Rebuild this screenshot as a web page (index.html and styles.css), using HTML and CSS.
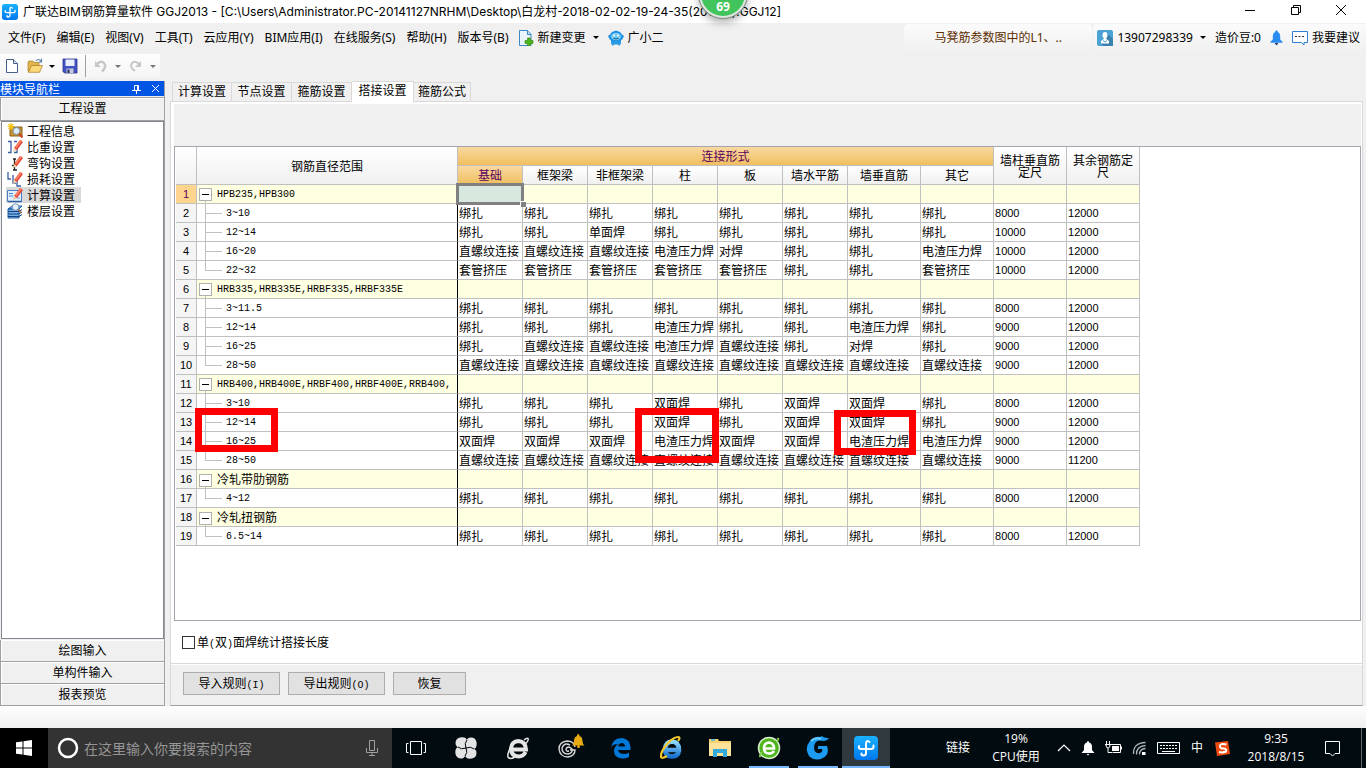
FILE: index.html
```html
<!DOCTYPE html>
<html lang="zh-CN">
<head>
<meta charset="utf-8">
<title>广联达BIM钢筋算量软件 GGJ2013</title>
<link rel="stylesheet" href="styles.css">
</head>
<body>
<svg width="0" height="0" class="defs" aria-hidden="true">
  <defs>
    <linearGradient id="g-app" x1="0" y1="0" x2="0" y2="1"><stop offset="0" stop-color="#1ab2ff"/><stop offset="1" stop-color="#0078ee"/></linearGradient>
    <linearGradient id="g-ie" x1="0" y1="0" x2="0" y2="1"><stop offset="0" stop-color="#8fdcff"/><stop offset="1" stop-color="#1a74cf"/></linearGradient>
    <symbol id="app" viewBox="0 0 24 24">
      <rect width="24" height="24" rx="4" fill="url(#g-app)"/>
      <path d="M15.500 6Q12 3.500 12 8v9q0 2.500-2.500 2.500T7.500 17.500M5 10Q4 13 7.500 13h9.500q3 0 2.500-3.500" fill="none" stroke="#fff" stroke-width="2" stroke-linecap="round"/>
    </symbol>
    <symbol id="pencil" viewBox="0 0 16 16"><path d="M7 9L13 1l3 2-6 8z" fill="#e8432e"/><path d="M8 8l6-7 1 .7-5.500 7.300z" fill="#ff8a6d"/><path d="M7 9l3 2-4 2z" fill="#f3cfa0"/></symbol>
  </defs>
</svg>

<div class="window">
  <header class="titlebar">
    <svg class="i16" viewBox="0 0 24 24"><use href="#app"/></svg>
    <h1 class="title">广联达BIM钢筋算量软件 GGJ2013 - [C:\Users\Administrator.PC-20141127NRHM\Desktop\白龙村-2018-02-02-19-24-35(2018版).GGJ12]</h1>
    <div class="speed">69</div>
    <div class="winctl">
      <button aria-label="最小化"><svg width="12" height="12"><path d="M1 6.500h10" stroke="#000"/></svg></button>
      <button aria-label="还原"><svg width="12" height="12"><path d="M1.500 3.500h7v7h-7zM3.500 3.500v-2h7v7h-2" fill="none" stroke="#000"/></svg></button>
      <button aria-label="关闭"><svg width="12" height="12"><path d="M1 1l10 10M11 1L1 11" stroke="#000"/></svg></button>
    </div>
  </header>

  <nav class="menubar">
    <div class="menus">
      <button>文件(F)</button><button>编辑(E)</button><button>视图(V)</button><button>工具(T)</button><button>云应用(Y)</button><button>BIM应用(I)</button><button>在线服务(S)</button><button>帮助(H)</button><button>版本号(B)</button>
    </div>
    <button class="mi">
      <svg class="i16" viewBox="0 0 16 16"><path d="M1.500.5h8l3.500 3.500v11.500H1.500z" fill="#eaf4fd" stroke="#3d87c4"/><path d="M9.500.5v4H13" fill="#bfdcf5" stroke="#3d87c4"/><path d="M9.500 8h3v2.500H15v3h-2.500V16h-3v-2.500H7v-3h2.500z" fill="#4db31c" stroke="#2f8410" stroke-width=".6"/></svg>
      新建变更 <i class="caret"></i>
    </button>
    <button class="mi">
      <svg class="i16" viewBox="0 0 16 16"><path d="M3 9h10v4.500l-1.500 2.300-2-1.300h-3l-2 1.300L3 13.500z" fill="#2a9be6"/><path d="M0 6l2-1.500L4 2l4-1.500L12 2l2 2.500L16 6l-1.500 3-2 2h-9l-2-2z" fill="#1c8fe0"/><ellipse cx="8" cy="6.500" rx="5.200" ry="3.700" fill="#79ccf8"/><circle cx="6" cy="5.500" r=".9" fill="#fff"/><circle cx="10" cy="5.500" r=".9" fill="#fff"/><path d="M5.500 8q2.500 1.800 5 0" stroke="#15578e" fill="none"/></svg>
      广小二
    </button>
    <div class="ticker">马凳筋参数图中的L1、..</div>
    <div class="account">
      <svg class="i16" viewBox="0 0 16 16"><rect width="16" height="16" rx="2" fill="#4aa3d4"/><path d="M11 4l5 5v7H6l-2-3z" fill="#3a83b0"/><path d="M5.500 5q0-3 2.500-3t2.500 3q0 3-1.500 3.800L12 11v2.500H4V11l3-2.200Q5.500 8 5.500 5z" fill="#fff"/><path d="M6 10.500l2 1.500 2-1.500" stroke="#4aa3d4" fill="none"/></svg>
      <button class="phone">13907298339 <i class="caret"></i></button>
      <span>造价豆:0</span>
      <svg class="i14" viewBox="0 0 14 16"><path d="M7 0q1.500 0 1.500 1.500Q11 2.500 11 6v3.500L13.500 12v1H.5v-1L3 9.500V6q0-3.500 2.500-4.500Q5.500 0 7 0z" fill="#2b8cf0"/><path d="M5 13.500h4L7 16z" fill="#17385c"/></svg>
      <button class="suggest"><svg class="i16" viewBox="0 0 16 16"><path d="M.5 1.500h15v11H12V15l-2.500-2.500h-9z" fill="#fff" stroke="#2f7fd8"/><path d="M3 6.500h2m1.500 0h2m1.500 0h2" stroke="#333"/></svg>我要建议</button>
    </div>
  </nav>

  <div class="toolbar">
    <button aria-label="新建"><svg class="i16" viewBox="0 0 16 16"><path d="M2.500 1.500h7l4 4v9h-11z" fill="#fff" stroke="#47608a"/><path d="M9.500 1.500v4h4" fill="#cfdcf0" stroke="#47608a"/></svg></button>
    <button aria-label="打开"><svg class="i16" viewBox="0 0 16 16"><path d="M1 4l1-1h4l1 1.500h5V8H5l-3 6-1-1z" fill="#e2b64f" stroke="#a9791f" stroke-width=".7"/><path d="M4.500 7.500h11l-3 6.800h-11z" fill="#fbd877" stroke="#a9791f" stroke-width=".7"/><path d="M9 3q2-3 5 0M14.500.8V4h-3" fill="none" stroke="#5b7fae" stroke-width="1.200"/></svg><i class="caret"></i></button>
    <button aria-label="保存"><svg class="i16" viewBox="0 0 16 16"><path d="M1 1h14v14H2.500L1 13.500z" fill="#4353c4" stroke="#283387" stroke-width=".8"/><path d="M3.500 1.500h9V8h-9z" fill="#e8f0fb"/><path d="M4.500 10.500h7V15h-7z" fill="#c3c9d8"/><path d="M5.500 11.500h2V15h-2z" fill="#252e63"/></svg></button>
    <span class="tsep"></span>
    <button aria-label="撤销" disabled><svg class="i16" viewBox="0 0 16 16"><path d="M4 6q4-4 7-1 3 4-2 8.500" fill="none" stroke="#c6c6c6" stroke-width="2.400"/><path d="M2 3v6h6z" fill="#c6c6c6"/></svg><i class="caret dim"></i></button>
    <button aria-label="重做" disabled><svg class="i16" viewBox="0 0 16 16"><path d="M11 6Q7 2 4 5q-3 4 3 8" fill="none" stroke="#c6c6c6" stroke-width="2"/><path d="M13 3v6H7z" fill="#c6c6c6"/></svg><i class="caret dim"></i></button>
  </div>

  <main class="main">
    <aside class="dock">
      <div class="docktitle"><span>模块导航栏</span>
        <button aria-label="固定"><svg width="9" height="10"><path d="M2.500 6V1.500h4V6M5.500 1v5M0 6.500h9M4.500 7v3" fill="none" stroke="#fff"/></svg></button>
        <button aria-label="关闭"><svg width="9" height="9"><path d="M1 1l7 7M8 1L1 8" stroke="#fff"/></svg></button>
      </div>
      <button class="section">工程设置</button>
      <ul class="navlist">
        <li><a href="#"><svg class="i16" viewBox="0 0 16 16"><path d="M3 4h12v9H3z" fill="#c8912d" stroke="#8b631c"/><path d="M4 0v7M.5 3.500h7M1.500 1l5 5M6.500 1l-5 5" stroke="#f5c518" stroke-width="1.200"/><circle cx="9.500" cy="8" r="3.500" fill="#dcecfa" stroke="#7590ab"/><path d="M12 10.500l3.500 4" stroke="#c44d22" stroke-width="2"/></svg><span>工程信息</span></a></li>
        <li><a href="#"><svg class="i16" viewBox="0 0 16 16"><path d="M1 2.500h3v11H1M7 2.500h3M7 13.500h3V9" fill="none" stroke="#3b5fa0" stroke-width="1.300"/><use href="#pencil"/></svg><span>比重设置</span></a></li>
        <li><a href="#"><svg class="i16" viewBox="0 0 16 16"><path d="M6 4h3M7.500 4v11M5 10.500h5M6 15h4" fill="none" stroke="#222" stroke-width="1.300"/><use href="#pencil"/></svg><span>弯钩设置</span></a></li>
        <li><a href="#"><svg class="i16" viewBox="0 0 16 16"><path d="M1 1v7h3M6 4v8h3M10 9v6h4" fill="none" stroke="#3b5fa0" stroke-width="1.300"/><use href="#pencil"/></svg><span>损耗设置</span></a></li>
        <li><a href="#" class="on"><svg class="i16" viewBox="0 0 16 16"><path d="M.5 3.500h14v11H.5z" fill="#e4effc" stroke="#4d7ec2"/><path d="M2 6.500h4M2 9h4" stroke="#3f8ae0"/><path d="M1 14.500h13.500" stroke="#2d5ca5" stroke-width="1.500"/><path d="M6 11h7" stroke="#7da7dc"/><use href="#pencil"/></svg><span>计算设置</span></a></li>
        <li><a href="#"><svg class="i16" viewBox="0 0 16 16"><path d="M1 6l4-3h10l-3 3zM1 6h11v9H1z" fill="#76b3ea" stroke="#1f5ea8"/><path d="M1 8.500h11l3-2M1 11h11l3-2M1 13.500h11l3-2" fill="none" stroke="#123f7b"/><circle cx="8.500" cy="4" r="3.300" fill="#e3f1fd" stroke="#7995b2"/><path d="M11 6.500l3 3" stroke="#b46c35" stroke-width="1.500"/></svg><span>楼层设置</span></a></li>
      </ul>
      <button class="section">绘图输入</button>
      <button class="section">单构件输入</button>
      <button class="section">报表预览</button>
    </aside>

    <section class="work">
      <div class="tabs" role="tablist">
        <button role="tab">计算设置</button><button role="tab">节点设置</button><button role="tab">箍筋设置</button><button role="tab" class="on" aria-selected="true">搭接设置</button><button role="tab">箍筋公式</button>
      </div>
      <div class="page">
        <div class="filler"></div>
        <div class="gridbox">
          <table class="grid">
            <colgroup><col class="c-no"><col class="c-name"><col span="6" class="c-s"><col span="4" class="c-m"></colgroup>
            <thead>
              <tr><th rowspan="2"></th><th rowspan="2">钢筋直径范围</th><th colspan="8" class="hot">连接形式</th><th rowspan="2" class="wrap">墙柱垂直筋定尺</th><th rowspan="2" class="wrap">其余钢筋定尺</th></tr>
              <tr><th class="hot">基础</th><th>框架梁</th><th>非框架梁</th><th>柱</th><th>板</th><th>墙水平筋</th><th>墙垂直筋</th><th>其它</th></tr>
            </thead>
            <tbody>
              <tr class="grp"><th class="cur">1</th><td class="name"><button aria-label="折叠"></button>HPB235,HPB300</td><td class="sel"><span></span></td><td></td><td></td><td></td><td></td><td></td><td></td><td></td><td></td><td></td></tr>
              <tr><th>2</th><td class="name">3~10</td><td>绑扎</td><td>绑扎</td><td>绑扎</td><td>绑扎</td><td>绑扎</td><td>绑扎</td><td>绑扎</td><td>绑扎</td><td class="n">8000</td><td class="n">12000</td></tr>
              <tr><th>3</th><td class="name">12~14</td><td>绑扎</td><td>绑扎</td><td>单面焊</td><td>绑扎</td><td>绑扎</td><td>绑扎</td><td>绑扎</td><td>绑扎</td><td class="n">10000</td><td class="n">12000</td></tr>
              <tr><th>4</th><td class="name">16~20</td><td>直螺纹连接</td><td>直螺纹连接</td><td>直螺纹连接</td><td>电渣压力焊</td><td>对焊</td><td>绑扎</td><td>绑扎</td><td>电渣压力焊</td><td class="n">10000</td><td class="n">12000</td></tr>
              <tr class="last"><th>5</th><td class="name">22~32</td><td>套管挤压</td><td>套管挤压</td><td>套管挤压</td><td>套管挤压</td><td>套管挤压</td><td>绑扎</td><td>绑扎</td><td>套管挤压</td><td class="n">10000</td><td class="n">12000</td></tr>
              <tr class="grp"><th>6</th><td class="name"><button aria-label="折叠"></button>HRB335,HRB335E,HRBF335,HRBF335E</td><td></td><td></td><td></td><td></td><td></td><td></td><td></td><td></td><td></td><td></td></tr>
              <tr><th>7</th><td class="name">3~11.5</td><td>绑扎</td><td>绑扎</td><td>绑扎</td><td>绑扎</td><td>绑扎</td><td>绑扎</td><td>绑扎</td><td>绑扎</td><td class="n">8000</td><td class="n">12000</td></tr>
              <tr><th>8</th><td class="name">12~14</td><td>绑扎</td><td>绑扎</td><td>绑扎</td><td>电渣压力焊</td><td>绑扎</td><td>绑扎</td><td>电渣压力焊</td><td>绑扎</td><td class="n">9000</td><td class="n">12000</td></tr>
              <tr><th>9</th><td class="name">16~25</td><td>绑扎</td><td>直螺纹连接</td><td>直螺纹连接</td><td>电渣压力焊</td><td>直螺纹连接</td><td>绑扎</td><td>对焊</td><td>绑扎</td><td class="n">9000</td><td class="n">12000</td></tr>
              <tr class="last"><th>10</th><td class="name">28~50</td><td>直螺纹连接</td><td>直螺纹连接</td><td>直螺纹连接</td><td>直螺纹连接</td><td>直螺纹连接</td><td>直螺纹连接</td><td>直螺纹连接</td><td>直螺纹连接</td><td class="n">9000</td><td class="n">12000</td></tr>
              <tr class="grp"><th>11</th><td class="name"><button aria-label="折叠"></button>HRB400,HRB400E,HRBF400,HRBF400E,RRB400,</td><td></td><td></td><td></td><td></td><td></td><td></td><td></td><td></td><td></td><td></td></tr>
              <tr><th>12</th><td class="name">3~10</td><td>绑扎</td><td>绑扎</td><td>绑扎</td><td>双面焊</td><td>绑扎</td><td>双面焊</td><td>双面焊</td><td>绑扎</td><td class="n">8000</td><td class="n">12000</td></tr>
              <tr><th>13</th><td class="name">12~14</td><td>绑扎</td><td>绑扎</td><td>绑扎</td><td>双面焊</td><td>绑扎</td><td>双面焊</td><td>双面焊</td><td>绑扎</td><td class="n">9000</td><td class="n">12000</td></tr>
              <tr><th>14</th><td class="name">16~25</td><td>双面焊</td><td>双面焊</td><td>双面焊</td><td>电渣压力焊</td><td>双面焊</td><td>双面焊</td><td>电渣压力焊</td><td>电渣压力焊</td><td class="n">9000</td><td class="n">12000</td></tr>
              <tr class="last"><th>15</th><td class="name">28~50</td><td>直螺纹连接</td><td>直螺纹连接</td><td>直螺纹连接</td><td>直螺纹连接</td><td>直螺纹连接</td><td>直螺纹连接</td><td>直螺纹连接</td><td>直螺纹连接</td><td class="n">9000</td><td class="n">11200</td></tr>
              <tr class="grp"><th>16</th><td class="name zh"><button aria-label="折叠"></button>冷轧带肋钢筋</td><td></td><td></td><td></td><td></td><td></td><td></td><td></td><td></td><td></td><td></td></tr>
              <tr class="last"><th>17</th><td class="name">4~12</td><td>绑扎</td><td>绑扎</td><td>绑扎</td><td>绑扎</td><td>绑扎</td><td>绑扎</td><td>绑扎</td><td>绑扎</td><td class="n">8000</td><td class="n">12000</td></tr>
              <tr class="grp"><th>18</th><td class="name zh"><button aria-label="折叠"></button>冷轧扭钢筋</td><td></td><td></td><td></td><td></td><td></td><td></td><td></td><td></td><td></td><td></td></tr>
              <tr class="last"><th>19</th><td class="name">6.5~14</td><td>绑扎</td><td>绑扎</td><td>绑扎</td><td>绑扎</td><td>绑扎</td><td>绑扎</td><td>绑扎</td><td>绑扎</td><td class="n">8000</td><td class="n">12000</td></tr>
            </tbody>
          </table>
          <div class="mark mark-a"></div>
          <div class="mark mark-b"></div>
          <div class="mark mark-c"></div>
        </div>
        <div class="option"><label><input type="checkbox"><span>单<span class="m">(</span>双<span class="m">)</span>面焊统计搭接长度</span></label></div>
        <div class="actions">
          <button>导入规则<span class="m">(I)</span></button><button>导出规则<span class="m">(O)</span></button><button class="short">恢复</button>
        </div>
      </div>
    </section>
  </main>
  <div class="status"></div>
</div>

<footer class="taskbar">
  <button class="start" aria-label="开始"><svg width="16" height="16"><path d="M0 2.300l6.500-.9v6.100H0zM7.500 1.200L16 0v7.500H7.500zM0 8.500h6.500v6.100L0 13.700zM7.500 8.500H16V16l-8.500-1.200z" fill="#fff"/></svg></button>
  <label class="search">
    <svg width="22" height="22"><circle cx="11" cy="11" r="9" fill="none" stroke="#fff" stroke-width="2.500"/></svg>
    <input type="text" placeholder="在这里输入你要搜索的内容">
    <svg width="12" height="16"><path d="M3.500.5h5v10h-5zM.5 8v4.500h11V8M6 12.500v3M3 15.500h6" fill="none" stroke="#a0a0a0"/></svg>
  </label>
  <div class="apps">
    <button aria-label="任务视图"><svg width="22" height="16"><path d="M5.500 1.500h11v13h-11zM3.500 3.500h-2v9h2M18.500 3.500h2v9h-2" fill="none" stroke="#fff"/></svg></button>
    <button class="w52" aria-label="浏览器"><svg width="22" height="22" viewBox="0 0 22 22"><g fill="#e4e4e4"><path id="petal" d="M11 11Q3 12 .8 8-.5 2 5 .5q7-1 7 4-2 3-1 6.500z"/><use href="#petal" transform="rotate(90 11 11)"/><use href="#petal" transform="rotate(180 11 11)"/><use href="#petal" transform="rotate(270 11 11)"/></g><path d="M11 11Q9 6 12 3M11 11q5-2 8 1M11 11q2 5-1 8M11 11q-5 2-8-1" stroke="#020b0f" fill="none"/></svg></button>
    <button class="w52" aria-label="IE"><svg width="24" height="24" viewBox="0 0 24 24"><path d="M19.500 16q-2 4.500-7 4.500-7.500-.5-7.500-8 .5-7 7.500-7.500 7 .5 7.500 8.500H7" fill="none" stroke="#e6e6e6" stroke-width="4"/><path d="M18 4q3-2.500 4-1.500 1 1.500-2 5M6 9Q1 17 2 21q2 3 7 0" fill="none" stroke="#e6e6e6" stroke-width="1.500"/></svg></button>
    <button class="w52" aria-label="提醒"><svg width="30" height="28" viewBox="0 0 30 28"><path d="M20 13q-1-6-8-6-8 1-8 8 1 8 9 8 7-1 7-7h-5M15 11q-6-3-8 3 0 6 6 6 5-1 4-5-4-4-6 0 0 3 3 2" fill="none" stroke="#d8d8d8" stroke-width="1.400"/><path d="M23 0q1.500 0 1.500 2 3 1 3 5 0 3 2 4.500H17Q19 10 19 7q0-4 3-5 0-2 1-2z" fill="#e9ab12"/><circle cx="23.500" cy="12.500" r="1.500" fill="#e9ab12"/></svg></button>
    <button class="w50" aria-label="Edge"><svg width="22" height="22" viewBox="0 0 22 22"><path d="M1 10Q3 1 12 1q8 1 8.500 9v3H8q1 4 6 4 3 0 5-1.500V20q-3 1.500-7 1.500Q4 21 4 14q0-4 4-7-5 0-7 3zM8.200 9.500H15Q15 6 11.500 6 8.500 6.500 8.200 9.500z" fill="#0078d7"/></svg></button>
    <button aria-label="Internet Explorer"><svg width="26" height="26" viewBox="0 0 26 26"><path d="M21 17q-2 4.500-7.500 4.500Q7 21 7 14q.5-7 7-7.500 7 .5 7 8.500H9" fill="none" stroke="url(#g-ie)" stroke-width="4.500"/><path d="M20 6q3-4 0-4-4 0-10 6-8 9-7 14 1 2 6-1" fill="none" stroke="#f3c62b" stroke-width="2.200"/></svg></button>
    <button aria-label="文件资源管理器"><svg width="22" height="20" viewBox="0 0 22 20"><path d="M0 1h9l1 2h12v15H0z" fill="#f7d36f"/><path d="M0 5h22v13H0z" fill="#fde39a"/><path d="M4 11h14v8h-4v-4H8v4H4z" fill="#35a8df"/><path d="M2 2h4" stroke="#3fb0e3" stroke-width="1.500"/></svg></button>
    <button class="run" aria-label="360浏览器"><svg width="24" height="24" viewBox="0 0 24 24"><circle cx="12" cy="12" r="10.500" fill="#4fb51c" stroke="#d9eecf" stroke-width="1.500"/><path d="M17 15q-1.500 2.500-5 2.500-5 0-5-5.500 0-5 5-5.500 5 .5 5 6H8" fill="none" stroke="#fff" stroke-width="2.600"/><path d="M20 3q3-2 0 3M4 20q-3 2 1-4" stroke="#7fd44f" fill="none" stroke-width="1.500"/></svg></button>
    <button class="run" aria-label="广联达"><svg width="24" height="26" viewBox="0 0 24 26"><path d="M23 3q-2 3-6 3-8-2-9 6 0 7 6 6 3-1 2-4h-4v-3h9q3 8-4 12-8 4-14-2-5-8 1-15Q9 1 14 2l2-1q2 2 7 2z" fill="#1c9bf0"/><path d="M5 6q4-4 10-2" stroke="#6cd0ff" stroke-width="2" fill="none"/></svg></button>
    <button class="active" aria-label="广联达BIM钢筋算量软件"><svg width="24" height="24" viewBox="0 0 24 24"><use href="#app"/></svg></button>
  </div>
  <div class="tray">
    <span class="link">链接</span>
    <span class="cpu">19%<br>CPU使用</span>
    <div class="icons">
      <svg width="14" height="16"><path d="M1 11l6-6 6 6" fill="none" stroke="#fff" stroke-width="1.200"/></svg>
      <svg width="14" height="16"><path d="M7 1q1 0 1 1.500 3 .5 3 4.500v3l2.500 3H.5L3 10V7q0-4 3-4.500Q6 1 7 1zM5.500 14h3L7 15.500z" fill="#fff"/></svg>
      <svg width="17" height="16"><path d="M5.500 4.500h10v8h-8M16.500 6.500v3" fill="none" stroke="#fff"/><path d="M7 6h7v5H7z" fill="#fff"/><path d="M1.500 1v3M4.500 1v3M0 4.500h6M1 5q0 3 2 3t2-3M3 8v4.500h4" fill="none" stroke="#fff"/></svg>
      <svg width="15" height="16"><path d="M1.500 14Q1 3 13.500 2.500M4.500 14.500Q4 6.500 13.500 5.500M7.500 14.500Q7.500 9 13.500 8.500" fill="none" stroke="#aeb5b8" stroke-width="1.300"/><path d="M10 12h3.500v3H10z" fill="#fff"/></svg>
      <svg width="23" height="16"><path d="M.5 2.500h22v11H.5z" fill="none" stroke="#fff"/><path d="M3 5.500h17M3 8.500h17" stroke="#fff" stroke-dasharray="2 1"/><path d="M5 11.500h13" stroke="#fff"/></svg>
      <span class="ime">中</span>
      <svg width="17" height="17" viewBox="0 0 17 17"><path d="M1 2.500L14 1l2 13-13 2z" fill="#f04a12"/><path d="M12.500 4.500Q6 3 6 6t4 2.500Q13 9 12 11.500 9 13 5 12" fill="none" stroke="#fff" stroke-width="2"/></svg>
    </div>
    <time class="clock">9:35<br>2018/8/15</time>
    <button class="notes" aria-label="通知"><svg width="17" height="17"><path d="M1.500 1.500h14v12H11l-2.500 2.500L6 13.500H1.500z" fill="none" stroke="#fff"/></svg></button>
  </div>
</footer>
</body>
</html>
```

FILE: styles.css
```css
* { box-sizing: border-box; }
html, body { height: 100%; }
body {
  margin: 0;
  display: flex;
  flex-direction: column;
  overflow: hidden;
  background: #f0f0f0;
  color: #000;
  font: 12px/16px "Noto Sans CJK SC", sans-serif;
}
button {
  margin: 0;
  padding: 0;
  border: 0;
  background: none;
  color: inherit;
  font: inherit;
  white-space: nowrap;
}
svg { display: block; flex: none; }
.defs { position: absolute; }
.i16 { width: 16px; height: 16px; }
.i14 { width: 13px; height: 16px; }
.m { font: 10px/10px "Liberation Mono", monospace; }
.caret {
  display: inline-block;
  border: 3px solid transparent;
  border-top-color: #000;
  border-bottom: 0;
}
.caret.dim { border-top-color: #777; }

.window { flex: 1; min-height: 0; display: flex; flex-direction: column; }

/* title bar */
.titlebar {
  position: relative;
  display: flex;
  align-items: center;
  height: 23px;
  padding-left: 2px;
  gap: 5px;
  background: #fff;
}
.title {
  flex: 1;
  margin: 0;
  font: 12px/22px Inter, "Noto Sans CJK SC", sans-serif;
  white-space: nowrap;
}
.winctl { display: flex; padding-right: 1px; }
.winctl button { width: 46px; display: flex; justify-content: center; padding-bottom: 3px; }
.winctl button:last-child { padding-right: 2px; }
.speed {
  position: absolute;
  left: 699px;
  top: -30px;
  z-index: 2;
  width: 48px;
  height: 48px;
  padding-top: 27px;
  border: 2px solid #dfe6e0;
  border-radius: 50%;
  background: #41c45c;
  box-shadow: 0 0 0 1px #7d8a80, 0 4px 8px rgba(0, 0, 0, .35);
  color: #fff;
  font: bold 12px/16px "Open Sans", sans-serif;
  text-align: center;
}

/* menu bar */
.menubar {
  display: flex;
  align-items: center;
  height: 29px;
  padding-left: 8px;
  gap: 9px;
  font-family: "Noto Sans", "Noto Sans CJK SC", sans-serif;
}
.menus { display: flex; gap: 11px; }
.mi { display: flex; align-items: center; gap: 4px; }
.mi .caret { margin-left: 3px; }
.ticker {
  width: 188px;
  height: 28px;
  margin-left: auto;
  padding-left: 30px;
  border-radius: 4px 4px 0 0;
  background: linear-gradient(#fbfbfb, #f0f0f0);
  color: #5c2e00;
  line-height: 28px;
  white-space: nowrap;
}
.account {
  display: flex;
  align-items: center;
  height: 28px;
  margin-left: -8px;
  padding: 0 6px 0 4px;
  gap: 9px;
  border-radius: 4px 0 0 0;
  background: linear-gradient(#fbfbfb, #f0f0f0);
  white-space: nowrap;
}
.account .phone { display: flex; align-items: center; gap: 7px; margin-left: -5px; }
.suggest { display: flex; align-items: center; gap: 4px; }

/* tool bar */
.toolbar {
  align-self: flex-start;
  display: flex;
  align-items: center;
  width: 160px;
  height: 24px;
  margin: 2px 0 3px;
  padding-left: 4px;
  gap: 7px;
  background: linear-gradient(#fdfdfd, #f5f5f5);
}
.toolbar button { display: flex; align-items: center; gap: 6px; }
.tsep { width: 1px; height: 22px; background: #a0a0a0; }

/* body */
.main { flex: 1; min-height: 0; display: flex; gap: 5px; }
.dock { width: 165px; display: flex; flex-direction: column; border-right: 1px solid #a0a0a0; }
.docktitle {
  display: flex;
  align-items: center;
  height: 15px;
  padding-right: 4px;
  gap: 10px;
  background: #0055e5;
  color: #fff;
  line-height: 14px;
}
.docktitle span { flex: 1; }
.section {
  height: 22px;
  padding-bottom: 2px;
  border: 1px solid #a0a0a0;
  border-width: 0 0 1px 1px;
  box-shadow: inset 1px 1px #fff;
}
.docktitle + .section { height: 24px; margin-top: 1px; border-top-width: 1px; }
.navlist {
  flex: 1;
  margin: 0 0 1px 1px;
  padding: 1px 0 0 4px;
  border: 1px solid #828790;
  background: #fff;
  list-style: none;
}
.navlist a {
  display: flex;
  width: 75px;
  gap: 4px;
  padding-left: 1px;
  color: #000;
  text-decoration: none;
  line-height: 16px;
  white-space: nowrap;
}
.navlist .on { background: #d9d9d9; }

.work { flex: 1; min-width: 0; display: flex; flex-direction: column; padding-right: 3px; }
.tabs { display: flex; align-items: flex-end; height: 20px; padding-left: 2px; }
.tabs button {
  height: 19px;
  width: 60px;
  padding-bottom: 2px;
  border: 1px solid #d9d9d9;
  border-width: 1px 1px 0 0;
  line-height: 16px;
}
.tabs button:first-child { border-left-width: 1px; }
.tabs button:last-child { width: 57px; }
.tabs .on { height: 21px; width: 62px; padding-bottom: 4px; background: #fff; margin-bottom: -1px; position: relative; }
.page {
  flex: 1;
  min-height: 0;
  display: flex;
  flex-direction: column;
  border: 1px solid #d9d9d9;
  border-bottom-color: #a0a0a0;
  background: #fff;
}
.filler { height: 42px; margin: 2px 1px 0 3px; background: #f0f0f0; }
.gridbox {
  position: relative;
  flex: 1;
  margin: 0 1px 0 3px;
  padding: 0 1px;
  border: 1px solid #a5a5b0;
}
.option { display: flex; align-items: center; height: 43px; padding-left: 11px; border-bottom: 1px solid #d9d9d9; }
.option label { display: flex; align-items: center; }
.option input {
  appearance: none;
  width: 13px;
  height: 13px;
  margin: 0 2px 0 0;
  border: 1px solid #333;
  background: #fff;
}
.actions {
  display: flex;
  align-items: center;
  height: 40px;
  margin-top: 1px;
  padding: 0 12px 3px;
  gap: 8px;
  background: #f0f0f0;
}
.actions button {
  width: 97px;
  height: 23px;
  padding-bottom: 2px;
  border: 1px solid #adadad;
  background: #e1e1e1;
}
.actions .short { width: 73px; }
.status { height: 22px; background: linear-gradient(#fefefe, #f0f0f0); }

/* grid */
.grid { width: 964px; table-layout: fixed; border-collapse: separate; border-spacing: 0; }
.c-no { width: 21px; }
.c-name { width: 261px; }
.c-s { width: 65px; }
.c-m { width: 73px; }
.grid th, .grid td {
  height: 19px;
  padding: 0;
  border: solid #c0c0c0;
  border-width: 0 1px 1px 0;
  line-height: 18px;
  white-space: nowrap;
  font-weight: normal;
}
.grid td { padding-left: 1px; }
.grid th { background: linear-gradient(#fff, #f0f0f0); }
.grid thead th { padding-bottom: 1px; line-height: 17px; }
.grid thead .wrap { padding: 0 5px; line-height: 12px; white-space: normal; }
.grid thead .hot { background: linear-gradient(#f9d9a0, #f0bf5f); color: #5c0060; }
.grid tbody th { background: #f5f5f5; font: 11px/18px "Liberation Sans", sans-serif; }
.grid tbody .cur { background: #ffd58e; color: #5c0060; }
.grid .n { font: 11px/18px "Liberation Sans", sans-serif; }
.grid .name {
  padding: 2px 0 0 29px;
  border-right-color: #000;
  background:
    linear-gradient(#c0c0c0, #c0c0c0) 8px 0 / 1px 100% no-repeat,
    linear-gradient(#c0c0c0, #c0c0c0) 8px 9px / 17px 1px no-repeat;
  font: 10px/16px "Liberation Mono", monospace;
}
.grid .last .name { background-size: 1px 9px, 17px 1px; }
.grid .grp td { background: #ffffe1; }
.grid .grp .name {
  padding: 2px 0 0 2px;
  background: linear-gradient(#c0c0c0, #c0c0c0) 8px bottom / 1px 3px no-repeat #ffffe1;
  line-height: 16px;
}
.grid .grp .zh { padding-top: 0; font: 12px/18px "Noto Sans CJK SC", sans-serif; }
.name button {
  display: inline-block;
  width: 13px;
  height: 13px;
  margin-right: 5px;
  border: 1px solid #b0b0b0;
  background: linear-gradient(#000, #000) center / 7px 1px no-repeat #fff;
  vertical-align: middle;
}
.grid .sel { position: relative; }
.sel span {
  position: absolute;
  inset: -2px;
  border: 3px solid #808080;
  background: #d9e8df;
}
.sel span::after {
  content: "";
  position: absolute;
  right: -5px;
  bottom: -5px;
  width: 5px;
  height: 5px;
  border: 1px solid #fff;
  border-width: 1px 0 0 1px;
  background: #808080;
}
.mark { position: absolute; border: 7px solid #f00; }
.mark-a { left: 20px; top: 261px; width: 83px; height: 44px; }
.mark-b { left: 460px; top: 261px; width: 84px; height: 55px; }
.mark-c { left: 659px; top: 263px; width: 82px; height: 45px; }

/* task bar */
.taskbar { display: flex; height: 40px; background: #020b0f; color: #fff; font-family: "Open Sans", "Noto Sans CJK SC", sans-serif; }
.taskbar button { display: flex; align-items: center; justify-content: center; }
.start { width: 48px; background: #000; }
.search { display: flex; align-items: center; width: 344px; padding: 0 14px 0 9px; gap: 5px; background: #333; }
.search input {
  flex: 1;
  min-width: 0;
  padding: 0;
  border: 0;
  outline: 0;
  background: none;
  color: #fff;
  font: 14px/20px "Noto Sans CJK SC", sans-serif;
}
.search input::placeholder { color: #969696; opacity: 1; }
.apps { display: flex; }
.apps button { width: 49px; }
.apps button:first-child, .apps .active { width: 48px; }
.apps .w52 { width: 52px; }
.apps .w50 { width: 50px; }
.apps .run { background: linear-gradient(#76b9ff, #76b9ff) center bottom / 40px 2px no-repeat; }
.apps .active { background: linear-gradient(#76b9ff, #76b9ff) center bottom / 48px 2px no-repeat #30393d; }
.tray { display: flex; align-items: center; margin-left: auto; white-space: nowrap; text-align: center; }
.link { width: 24px; margin-right: 20px; }
.cpu { width: 52px; margin-right: 15px; }
.icons { display: flex; align-items: center; gap: 10px; }
.ime { width: 14px; }
.cpu, .clock { line-height: 18px; }
.clock { width: 60px; margin: 0 18px 0 15px; }
.notes { height: 40px; padding-right: 20px; border-right: 1px solid #666; margin-right: 4px; }
```
